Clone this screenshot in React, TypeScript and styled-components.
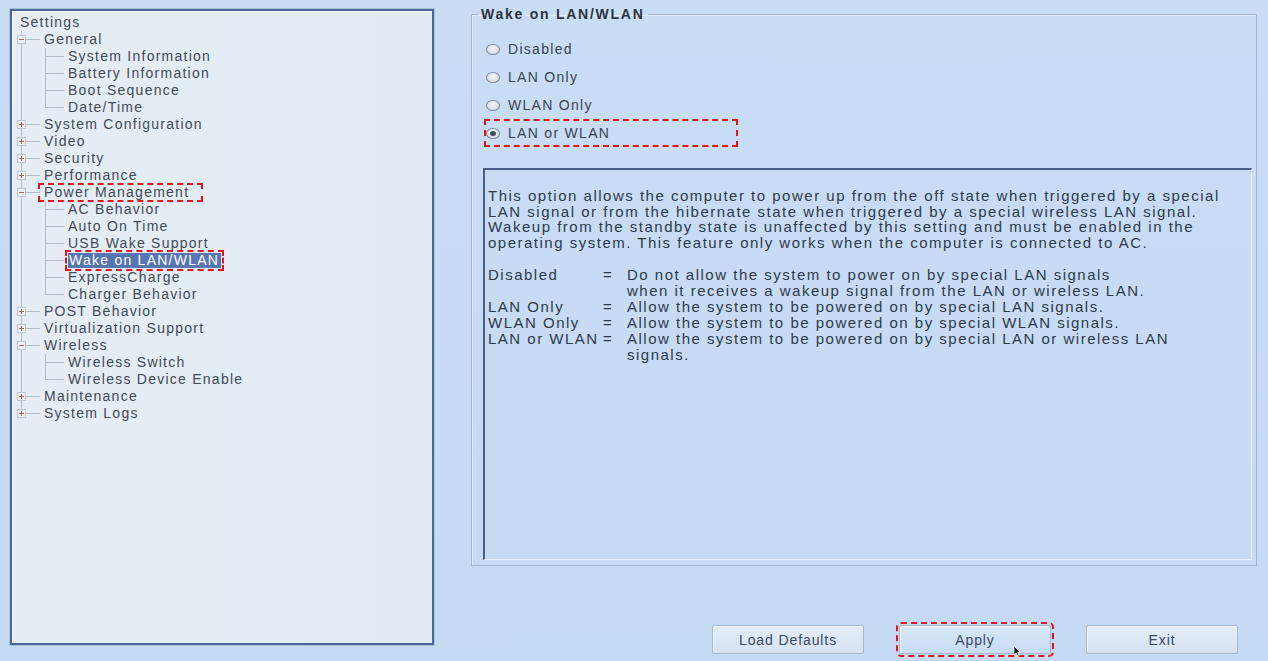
import React from 'react';
import styled, { createGlobalStyle, css } from 'styled-components';

const GlobalStyle = createGlobalStyle`
  html, body { margin: 0; padding: 0; background: #c8dcf4; }
  body { font-family: "Liberation Sans", Arial, sans-serif; color: #3b4452; }
  * { box-sizing: border-box; }
`;

const Screen = styled.div`
  width: 1268px;
  height: 661px;
  overflow: hidden;
  display: flex;
  align-items: flex-start;
  background: linear-gradient(180deg, #c9ddf5 0%, #c5daf3 100%);
`;

/* ---------- Left tree panel ---------- */

const LeftPanel = styled.div`
  margin: 9px 0 0 10px;
  width: 424px;
  height: 636px;
  border: 2px solid #4c6894;
  box-shadow: 0 0 0 1px #a9c1df, inset 1px 1px 0 #f4f7fa;
  background: linear-gradient(90deg, #e6edf4 0%, #e2ebf4 100%);
  padding: 3px 0 0 8px;
`;

const Tree = styled.div`
  display: flex;
  flex-direction: column;
`;

const Row = styled.div`
  display: flex;
  align-items: center;
  height: 17px;
  font-size: 14px;
  line-height: 17px;
  letter-spacing: 1.25px;
  color: #414a57;
  white-space: nowrap;
`;

type GuideKind = 'pipe' | 'tee' | 'elbow' | 'blank';

const Guide = styled.span<{ $kind: GuideKind }>`
  position: relative;
  flex: 0 0 24px;
  height: 17px;
  ${(p) =>
    p.$kind !== 'blank' &&
    css`
      &::before {
        content: '';
        position: absolute;
        left: 1px;
        top: 0;
        width: 1px;
        bottom: ${p.$kind === 'elbow' ? '8px' : '0'};
        background: #b3bdc8;
      }
    `}
  ${(p) =>
    (p.$kind === 'tee' || p.$kind === 'elbow') &&
    css`
      &::after {
        content: '';
        position: absolute;
        left: 1px;
        right: 4px;
        top: 8px;
        height: 1px;
        background: #b3bdc8;
      }
    `}
`;

const Expander = styled.span<{ $open: boolean }>`
  position: absolute;
  left: -3px;
  top: 4px;
  width: 9px;
  height: 9px;
  border: 1px solid #bcc6d1;
  background: #eef2f6;
  z-index: 1;
  &::before {
    content: '';
    position: absolute;
    left: 1px;
    top: 3px;
    width: 5px;
    height: 1px;
    background: #c06060;
  }
  ${(p) =>
    !p.$open &&
    css`
      &::after {
        content: '';
        position: absolute;
        left: 3px;
        top: 1px;
        width: 1px;
        height: 5px;
        background: #c06060;
      }
    `}
`;

const Label = styled.span<{ $mark?: 'box' | 'selected' }>`
  display: inline-block;
  ${(p) =>
    p.$mark === 'box' &&
    css`
      height: 15px;
      line-height: 15px;
      margin-left: -4px;
      padding: 0 12px 0 4px;
      outline: 2px dashed #e3151c;
    `}
  ${(p) =>
    p.$mark === 'selected' &&
    css`
      height: 15px;
      line-height: 15px;
      padding: 0 2px 0 1px;
      background: #5676b3;
      color: #ffffff;
      outline: 2px dashed #e3151c;
      outline-offset: 1px;
    `}
`;

type Leaf = { label: string; mark?: 'box' | 'selected' };
type Branch = { label: string; open?: boolean; mark?: 'box' | 'selected'; children?: Leaf[] };

const TREE: Branch[] = [
  {
    label: 'General',
    open: true,
    children: [
      { label: 'System Information' },
      { label: 'Battery Information' },
      { label: 'Boot Sequence' },
      { label: 'Date/Time' },
    ],
  },
  { label: 'System Configuration' },
  { label: 'Video' },
  { label: 'Security' },
  { label: 'Performance' },
  {
    label: 'Power Management',
    open: true,
    mark: 'box',
    children: [
      { label: 'AC Behavior' },
      { label: 'Auto On Time' },
      { label: 'USB Wake Support' },
      { label: 'Wake on LAN/WLAN', mark: 'selected' },
      { label: 'ExpressCharge' },
      { label: 'Charger Behavior' },
    ],
  },
  { label: 'POST Behavior' },
  { label: 'Virtualization Support' },
  {
    label: 'Wireless',
    open: true,
    children: [{ label: 'Wireless Switch' }, { label: 'Wireless Device Enable' }],
  },
  { label: 'Maintenance' },
  { label: 'System Logs' },
];

function SettingsTree() {
  const rows: React.ReactNode[] = [
    <Row key="root">
      <Label>Settings</Label>
    </Row>,
  ];
  TREE.forEach((b, i) => {
    const last = i === TREE.length - 1;
    rows.push(
      <Row key={b.label}>
        <Guide $kind={last ? 'elbow' : 'tee'}>
          <Expander $open={!!b.open} />
        </Guide>
        <Label $mark={b.mark}>{b.label}</Label>
      </Row>
    );
    if (b.open && b.children) {
      b.children.forEach((c, j) => {
        const cLast = j === b.children!.length - 1;
        rows.push(
          <Row key={b.label + c.label}>
            <Guide $kind={last ? 'blank' : 'pipe'} />
            <Guide $kind={cLast ? 'elbow' : 'tee'} />
            <Label $mark={c.mark}>{c.label}</Label>
          </Row>
        );
      });
    }
  });
  return <Tree>{rows}</Tree>;
}

/* ---------- Right side ---------- */

const RightColumn = styled.div`
  flex: 1;
  display: flex;
  flex-direction: column;
  padding: 6px 11px 0 37px;
`;

const GroupBox = styled.fieldset`
  margin: 0;
  height: 560px;
  border: 1px solid #a1b5cf;
  box-shadow: inset 1px 1px 0 #e3edf9;
  padding: 0 4px 5px 11px;
  display: flex;
  flex-direction: column;
`;

const GroupTitle = styled.legend`
  margin-left: -5px;
  padding: 0 3px;
  font-size: 14px;
  line-height: 16px;
  font-weight: bold;
  letter-spacing: 1.75px;
  color: #2d3440;
`;

const RadioList = styled.div`
  display: flex;
  flex-direction: column;
  margin-top: 13px;
`;

const RadioRow = styled.div<{ $marked?: boolean }>`
  display: flex;
  align-items: center;
  height: 28px;
  margin-left: 1px;
  padding-left: 2px;
  gap: 8px;
  font-size: 14px;
  letter-spacing: 1.3px;
  color: #3b4452;
  ${(p) =>
    p.$marked &&
    css`
      width: 254px;
      outline: 2px dashed #e3151c;
      outline-offset: -2px;
    `}
`;

const RadioDot = styled.span<{ $checked?: boolean }>`
  position: relative;
  flex: 0 0 14px;
  width: 14px;
  height: 11px;
  border-radius: 50%;
  border: 1px solid #7e8b9c;
  background: radial-gradient(ellipse at 50% 35%, #f4f6f9 0%, #d7dee7 70%, #c3ccd8 100%);
  ${(p) =>
    p.$checked &&
    css`
      &::after {
        content: '';
        position: absolute;
        left: 3px;
        top: 2px;
        width: 6px;
        height: 5px;
        border-radius: 50%;
        background: #454c59;
      }
    `}
`;

const Description = styled.div`
  margin-top: 21px;
  height: 392px;
  border-top: 2px solid #4a5f89;
  border-left: 2px solid #4a5f89;
  border-right: 1px solid #e8f0fa;
  border-bottom: 1px solid #e8f0fa;
  padding: 18px 6px 0 3px;
  font-size: 15px;
  line-height: 15.7px;
  letter-spacing: 1.5px;
  color: #2f3a4b;
  white-space: nowrap;
`;

const Paragraph = styled.p`
  margin: 0 0 15.7px 0;
`;

const DefList = styled.div`
  display: grid;
  grid-template-columns: 115px 24px 1fr;
  line-height: 16px;
`;

const Term = styled.span``;
const Equals = styled.span``;
const Meaning = styled.span``;

const ButtonBar = styled.div`
  margin-top: 59px;
  display: flex;
  justify-content: flex-end;
  gap: 35px;
  padding-right: 19px;
`;

const Button = styled.button<{ $marked?: boolean }>`
  position: relative;
  width: 152px;
  height: 29px;
  border: 1px solid #a7b7cc;
  border-radius: 2px;
  background: linear-gradient(180deg, #e4edf8 0%, #d6e3f3 100%);
  box-shadow: inset 1px 1px 0 #f2f6fb;
  font-family: "Liberation Sans", Arial, sans-serif;
  font-size: 14px;
  letter-spacing: 0.9px;
  color: #3a4a63;
  padding: 0;
  ${(p) =>
    p.$marked &&
    css`
      background: linear-gradient(180deg, #d9e7f8 0%, #c6dcf4 100%);
      outline: 2px dashed #e3151c;
      outline-offset: 1px;
    `}
`;

const Cursor = styled.svg`
  position: absolute;
  left: 113px;
  top: 19px;
`;

const OPTIONS = ['Disabled', 'LAN Only', 'WLAN Only', 'LAN or WLAN'];

export default function App() {
  return (
    <>
      <GlobalStyle />
      <Screen>
        <LeftPanel>
          <SettingsTree />
        </LeftPanel>
        <RightColumn>
          <GroupBox>
            <GroupTitle>Wake on LAN/WLAN</GroupTitle>
            <RadioList>
              {OPTIONS.map((o, i) => (
                <RadioRow key={o} $marked={i === 3}>
                  <RadioDot $checked={i === 3} />
                  {o}
                </RadioRow>
              ))}
            </RadioList>
            <Description>
              <Paragraph>
                This option allows the computer to power up from the off state when triggered by a special
                <br />
                LAN signal or from the hibernate state when triggered by a special wireless LAN signal.
                <br />
                Wakeup from the standby state is unaffected by this setting and must be enabled in the
                <br />
                operating system. This feature only works when the computer is connected to AC.
              </Paragraph>
              <DefList>
                <Term>Disabled</Term>
                <Equals>=</Equals>
                <Meaning>
                  Do not allow the system to power on by special LAN signals
                  <br />
                  when it receives a wakeup signal from the LAN or wireless LAN.
                </Meaning>
                <Term>LAN Only</Term>
                <Equals>=</Equals>
                <Meaning>Allow the system to be powered on by special LAN signals.</Meaning>
                <Term>WLAN Only</Term>
                <Equals>=</Equals>
                <Meaning>Allow the system to be powered on by special WLAN signals.</Meaning>
                <Term>LAN or WLAN</Term>
                <Equals>=</Equals>
                <Meaning>
                  Allow the system to be powered on by special LAN or wireless LAN
                  <br />
                  signals.
                </Meaning>
              </DefList>
            </Description>
          </GroupBox>
          <ButtonBar>
            <Button>Load Defaults</Button>
            <Button $marked>
              Apply
              <Cursor width="9" height="12" viewBox="0 0 9 12">
                <path d="M1 1 L1 10 L3.2 8 L4.8 11.3 L6.2 10.7 L4.7 7.5 L7.6 7.5 Z" fill="#111" stroke="#fff" strokeWidth="0.8" />
              </Cursor>
            </Button>
            <Button>Exit</Button>
          </ButtonBar>
        </RightColumn>
      </Screen>
    </>
  );
}
